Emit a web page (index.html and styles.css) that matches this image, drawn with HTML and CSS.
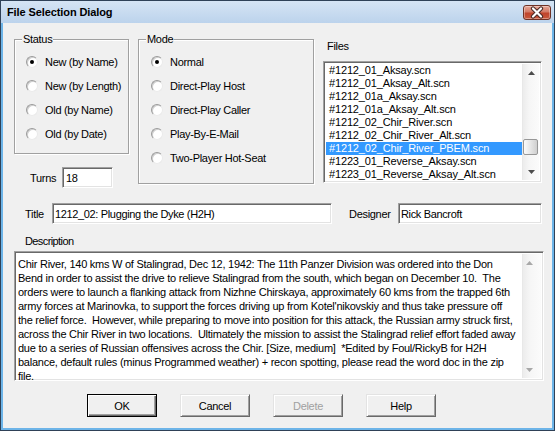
FILE: index.html
```html
<!DOCTYPE html>
<html>
<head>
<meta charset="utf-8">
<title>File Selection Dialog</title>
<link rel="stylesheet" href="styles.css">
</head>
<body>
<div class="window">
  <div class="titlebar">
    <span class="title">File Selection Dialog</span>
    <div class="close">
      <svg width="26" height="13" viewBox="0 0 26 13">
        <path d="M9 2.5 L17 10.5 M17 2.5 L9 10.5" stroke="#4a2a26" stroke-width="4.2" stroke-linecap="round"/>
        <path d="M9 2.5 L17 10.5 M17 2.5 L9 10.5" stroke="#ffffff" stroke-width="2.2" stroke-linecap="round"/>
      </svg>
    </div>
  </div>
  <div class="client">
    <div class="top">
      <div class="leftcol">
        <fieldset class="group status">
          <legend>Status</legend>
          <div class="radios">
            <div class="row"><span class="radio checked"></span><span>New (by Name)</span></div>
            <div class="row"><span class="radio"></span><span>New (by Length)</span></div>
            <div class="row"><span class="radio"></span><span>Old (by Name)</span></div>
            <div class="row"><span class="radio"></span><span>Old (by Date)</span></div>
          </div>
        </fieldset>
        <div class="turns">
          <span class="lbl turns-lbl">Turns</span>
          <div class="sunken field turns-field">18</div>
        </div>
      </div>
      <fieldset class="group mode">
        <legend>Mode</legend>
        <div class="radios">
          <div class="row"><span class="radio checked"></span><span>Normal</span></div>
          <div class="row"><span class="radio"></span><span>Direct-Play Host</span></div>
          <div class="row"><span class="radio"></span><span>Direct-Play Caller</span></div>
          <div class="row"><span class="radio"></span><span>Play-By-E-Mail</span></div>
          <div class="row"><span class="radio"></span><span>Two-Player Hot-Seat</span></div>
        </div>
      </fieldset>
      <div class="files">
        <div class="files-lbl">Files</div>
        <div class="sunken listbox">
          <div class="items">
            <div class="item">#1212_01_Aksay.scn</div>
            <div class="item">#1212_01_Aksay_Alt.scn</div>
            <div class="item">#1212_01a_Aksay.scn</div>
            <div class="item">#1212_01a_Aksay_Alt.scn</div>
            <div class="item">#1212_02_Chir_River.scn</div>
            <div class="item">#1212_02_Chir_River_Alt.scn</div>
            <div class="item selected">#1212_02_Chir_River_PBEM.scn</div>
            <div class="item">#1223_01_Reverse_Aksay.scn</div>
            <div class="item">#1223_01_Reverse_Aksay_Alt.scn</div>
          </div>
          <div class="vscroll">
            <div class="arrow-btn">
              <svg width="7" height="4" viewBox="0 0 7 4"><polygon points="0,4 3.5,0 7,4" fill="#4d4d4d"/></svg>
            </div>
            <div class="track"><div class="thumb"></div></div>
            <div class="arrow-btn">
              <svg width="7" height="4" viewBox="0 0 7 4"><polygon points="0,0 7,0 3.5,4" fill="#4d4d4d"/></svg>
            </div>
          </div>
        </div>
      </div>
    </div>
    <div class="titlerow">
      <span class="lbl title-lbl">Title</span>
      <div class="sunken field title-field">1212_02: Plugging the Dyke (H2H)</div>
      <span class="lbl designer-lbl">Designer</span>
      <div class="sunken field designer-field">Rick Bancroft</div>
    </div>
    <div class="desc-lbl">Description</div>
    <div class="sunken textarea">
      <div class="desc-text">
        <span class="line">Chir River, 140 kms W of Stalingrad, Dec 12, 1942: The 11th Panzer Division was ordered into the Don</span>
        <span class="line">Bend in order to assist the drive to relieve Stalingrad from the south, which began on December 10.  The</span>
        <span class="line">orders were to launch a flanking attack from Nizhne Chirskaya, approximately 60 kms from the trapped 6th</span>
        <span class="line">army forces at Marinovka, to support the forces driving up from Kotel'nikovskiy and thus take pressure off</span>
        <span class="line">the relief force.  However, while preparing to move into position for this attack, the Russian army struck first,</span>
        <span class="line">across the Chir River in two locations.  Ultimately the mission to assist the Stalingrad relief effort faded away</span>
        <span class="line">due to a series of Russian offensives across the Chir. [Size, medium]  *Edited by Foul/RickyB for H2H</span>
        <span class="line">balance, default rules (minus Programmed weather) + recon spotting, please read the word doc in the zip</span>
        <span class="line last">file.</span>
      </div>
      <div class="vscroll disabled">
        <div class="arrow-btn">
          <svg width="7" height="4" viewBox="0 0 7 4"><polygon points="0,4 3.5,0 7,4" fill="#a8a8a8"/></svg>
        </div>
        <div class="track"></div>
        <div class="arrow-btn">
          <svg width="7" height="4" viewBox="0 0 7 4"><polygon points="0,0 7,0 3.5,4" fill="#a8a8a8"/></svg>
        </div>
      </div>
    </div>
    <div class="buttons">
      <div class="btn default">OK</div>
      <div class="btn">Cancel</div>
      <div class="btn disabled">Delete</div>
      <div class="btn">Help</div>
    </div>
  </div>
</div>
</body>
</html>
```
FILE: styles.css
```css
* { box-sizing: border-box; }
html, body { margin: 0; padding: 0; }
body {
  font-family: "Liberation Sans", Arial, sans-serif;
  font-size: 11px;
  letter-spacing: -0.3px;
  color: #000;
  background: #f0f0f0;
}
.window {
  width: 555px;
  height: 431px;
  border: 1px solid #2f4157;
  background: #6db4e8;
  display: flex;
  flex-direction: column;
}
.titlebar {
  height: 22px;
  flex: none;
  background: linear-gradient(#d5e4f4, #bcd3ec);
  display: flex;
  align-items: center;
  padding-left: 6px;
}
.title {
  font-weight: bold;
  font-size: 11px;
  letter-spacing: -0.1px;
}
.close {
  margin-left: auto;
  margin-right: 3px;
  width: 28px;
  height: 15px;
  border: 1px solid #6e3226;
  border-radius: 3px;
  background: linear-gradient(#e8a898, #d27a66 45%, #c0442c 55%, #c8583c);
  display: flex;
  align-items: center;
  justify-content: center;
  box-shadow: inset 0 0 0 1px rgba(255,255,255,0.35);
}
.close svg { display: block; }
.client {
  flex: 1;
  margin: 0 2px 2px 2px;
  background: #f0f0f0;
  display: flex;
  flex-direction: column;
}
.top {
  height: 180px;
  flex: none;
  display: flex;
  padding-left: 11px;
}
.group {
  margin: 10px 0 0 0;
  padding: 0;
  border: 1px solid #a0a0a0;
  box-shadow: 1px 1px 0 #fff, inset 1px 1px 0 #fff;
  min-width: 0;
}
.group legend {
  margin-left: 7px;
  padding: 0 1px;
  line-height: 13px;
  background: #f0f0f0;
}
.status { width: 115px; height: 121px; }
.mode { width: 176px; height: 151px; margin-left: 9px; }
.radios { padding-top: 4px; }
.status .radios { padding-left: 11px; }
.mode .radios { padding-left: 12px; }
.row {
  height: 24px;
  display: flex;
  align-items: center;
}
.radio {
  width: 12px;
  height: 12px;
  border-radius: 50%;
  background: #fff;
  border: 1px solid;
  border-color: #9a9a9a #eaeaea #eaeaea #9a9a9a;
  box-shadow: inset 1px 1px 0 #cfcfcf;
  margin-right: 7px;
  display: flex;
  align-items: center;
  justify-content: center;
  flex: none;
}
.radio.checked::after {
  content: "";
  width: 4px;
  height: 4px;
  border-radius: 50%;
  background: #000;
}
.leftcol { display: flex; flex-direction: column; }
.turns {
  margin-top: 13px;
  display: flex;
  align-items: center;
  padding-left: 16px;
  height: 21px;
}
.turns-lbl { width: 32px; }
.sunken {
  background: #fff;
  border: 1px solid;
  border-color: #a0a0a0 #fff #fff #a0a0a0;
  box-shadow: inset 1px 1px 0 #696969, inset -1px -1px 0 #e3e3e3;
}
.field {
  height: 21px;
  display: flex;
  align-items: center;
  padding-left: 2px;
  white-space: nowrap;
  font-size: 11px;
  letter-spacing: -0.35px;
}
.turns-field { width: 51px; padding-left: 3px; }
.files { margin-left: 9px; display: flex; flex-direction: column; }
.files-lbl {
  margin-top: 17px;
  padding-left: 4px;
  line-height: 13px;
  height: 13px;
}
.listbox {
  margin-top: 8px;
  width: 219px;
  height: 122px;
  display: flex;
  padding: 2px;
}
.items { flex: 1; }
.item {
  height: 13px;
  line-height: 13px;
  padding-left: 3px;
  font-size: 11px;
  letter-spacing: -0.15px;
  white-space: nowrap;
}
.item.selected { background: #3399ff; color: #fff; }
.vscroll {
  width: 17px;
  flex: none;
  display: flex;
  flex-direction: column;
  background: linear-gradient(to right, #ececec, #f6f6f6 40%, #fbfbfb);
  border-left: 1px solid #e8e8e8;
}
.textarea .vscroll { width: 19px; }
.arrow-btn {
  height: 17px;
  flex: none;
  display: flex;
  align-items: center;
  justify-content: center;
}
.textarea .arrow-btn { justify-content: flex-start; padding-left: 3px; }
.arrow-btn svg { display: block; }
.track { flex: 1; }
.thumb {
  margin: 58px 0 0 0;
  width: 15px;
  height: 16px;
  border: 1px solid #979797;
  border-radius: 2px;
  background: linear-gradient(to right, #fbfbfb, #e6e6e6 50%, #cfcfcf);
}
.titlerow {
  height: 21px;
  flex: none;
  display: flex;
  align-items: center;
  padding-left: 22px;
}
.title-lbl { width: 27px; }
.title-field { width: 280px; }
.designer-lbl { margin-left: 17px; width: 49px; }
.designer-field { width: 144px; }
.desc-lbl {
  margin-top: 11px;
  padding-left: 22px;
  line-height: 13px;
  height: 13px;
  letter-spacing: -0.6px;
}
.textarea {
  margin: 3px 0 0 11px;
  width: 530px;
  height: 130px;
  flex: none;
  display: flex;
  padding: 2px;
}
.desc-text {
  flex: 1;
  padding: 3px 0 0 1px;
}
.line {
  display: block;
  height: 14px;
  line-height: 14px;
  white-space: pre;
  font-size: 11px;
  letter-spacing: -0.25px;
}
.line.last { height: 12px; line-height: 12px; margin-top: 1px; }
.buttons {
  margin-top: 13px;
  display: flex;
  gap: 23px;
  padding-left: 84px;
}
.btn {
  width: 70px;
  height: 23px;
  background: #f0f0f0;
  border: 1px solid;
  border-color: #e3e3e3 #696969 #696969 #e3e3e3;
  box-shadow: inset 1px 1px 0 #fff, inset -1px -1px 0 #a0a0a0;
  display: flex;
  align-items: center;
  justify-content: center;
  font-size: 11px;
}
.btn.default {
  border-color: #000;
  box-shadow: inset 1px 1px 0 #fff, inset -1px -1px 0 #696969, inset -2px -2px 0 #a0a0a0;
}
.btn.disabled { color: #a0a0a0; }
```
